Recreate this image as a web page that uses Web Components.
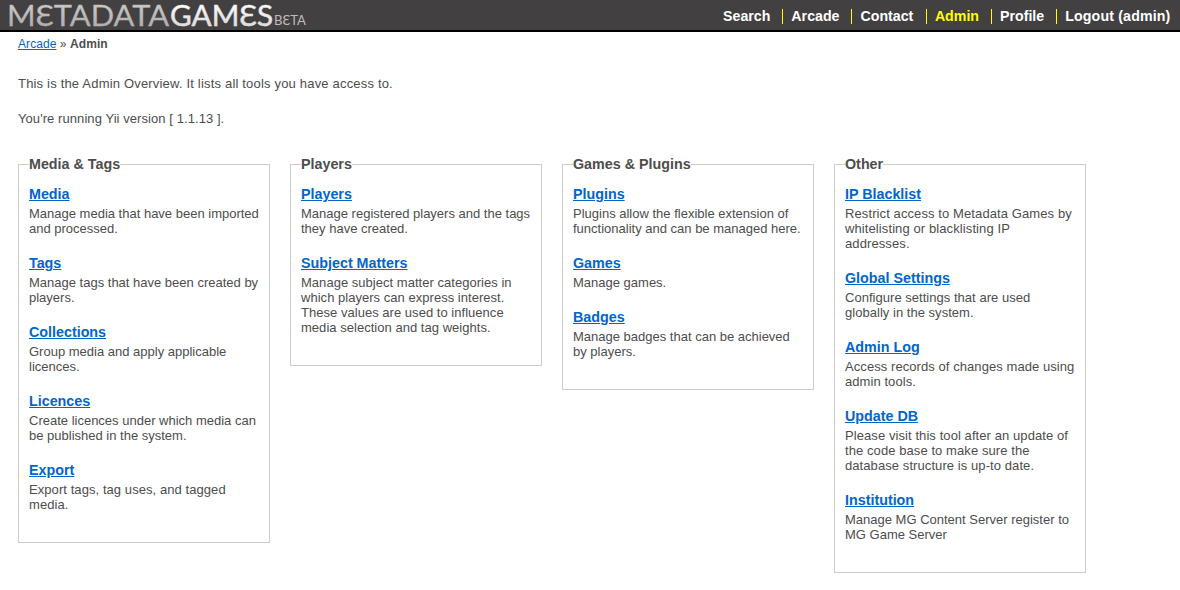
<!DOCTYPE html>
<html lang="en">
<head>
<meta charset="utf-8">
<title>Metadata Games - Admin</title>
<style>
html, body { margin: 0; background: #fff; }
body { font: 13px/15px "Liberation Sans", Arial, sans-serif; color: #4d4d4d; height: 590px; overflow: hidden; }
</style>
</head>
<body>
<mg-page></mg-page>
<script>
const define = (name, html, setup) => customElements.define(name, class extends HTMLElement {
  constructor() {
    super();
    this.attachShadow({ mode: 'open' }).innerHTML = html;
  }
  connectedCallback() { if (setup) setup(this, this.shadowRoot); }
});

define('mg-logo', `
<style>:host{display:block;width:310px;height:30px} svg{display:block;overflow:visible} text{font-family:Lato,"Noto Sans",sans-serif}</style>
<svg width="310" height="30" role="img" aria-label="Metadata Games Beta">
  <defs>
    <linearGradient id="a" x1="0" x2="0" y1="0" y2="1"><stop offset="0.2" stop-color="#cbc9ca"/><stop offset="0.8" stop-color="#b0aeaf"/></linearGradient>
    <linearGradient id="b" x1="0" x2="0" y1="0" y2="1"><stop offset="0.2" stop-color="#fff"/><stop offset="0.8" stop-color="#dcdcdc"/></linearGradient>
  </defs>
  <text x="7" y="26" font-size="29" font-weight="400" fill="url(#a)" stroke="#b9b7b8" stroke-width=".3" textLength="162" lengthAdjust="spacingAndGlyphs">MƐTADATA</text>
  <text x="170" y="26" font-size="29" font-weight="400" fill="url(#b)" stroke="#e8e8e8" stroke-width=".5" textLength="103" lengthAdjust="spacingAndGlyphs">GAMƐS</text>
  <text x="274" y="25" font-size="13" fill="#bdbbbc" textLength="32" lengthAdjust="spacingAndGlyphs">BƐTA</text>
</svg>`);

define('mg-nav-item', `
<style>
:host{display:block;padding:0 12px 0 8px;border-right:1px solid #ff0;height:15px;line-height:15px;color:#fff;white-space:nowrap}
:host([active]){color:#ff0}
:host(:nth-child(3)){padding-right:12.6px}
:host(:last-child){border-right:0;padding-right:9.5px;letter-spacing:.15px}
a{color:inherit;text-decoration:none}
</style><a href="#"><slot></slot></a>`);

define('mg-header', `
<style>
:host{display:flex;justify-content:space-between;height:30px;background:#434041;border-bottom:2px solid #000}
nav{display:flex;padding-top:9px;font-weight:bold;font-size:14.2px}
</style>
<mg-logo></mg-logo>
<nav><slot></slot></nav>`);

define('mg-breadcrumbs', `
<style>:host{display:block;font-size:12px;line-height:14px;letter-spacing:.07px}a{color:#06c}b{font-weight:bold}</style>
<a href="#">Arcade</a> » <b>Admin</b>`);

define('mg-tool', `
<style>
:host{display:block;padding-bottom:19px}
a{display:block;width:max-content;font-weight:bold;font-size:14.3px;line-height:17px;color:#06c;margin-bottom:3px}
p{margin:0;line-height:15px;letter-spacing:var(--tracking,0)}
</style><a href="#"></a><p><slot></slot></p>`, (el, root) => { root.querySelector('a').textContent = el.getAttribute('name'); });

define('mg-panel', `
<style>
:host{display:block}
fieldset{margin:0;min-width:0;box-sizing:border-box;width:252px;border:1px solid #ccc;padding:13px 10px 11px}
legend{padding:0;font-weight:bold;font-size:14.3px;line-height:17px;height:17px}
</style><fieldset><legend></legend><slot></slot></fieldset>`, (el, root) => { root.querySelector('legend').textContent = el.getAttribute('heading'); });

define('mg-page', `
<style>
:host{display:block}
main{padding:5px 18px 0}
p{margin:0 0 20px;line-height:15px}
.intro{letter-spacing:.185px}
.version{letter-spacing:.07px}
mg-breadcrumbs{margin-bottom:25px}
.panels{display:flex;align-items:flex-start;gap:20px;margin-top:30px}
</style>
<mg-header>
  <mg-nav-item>Search</mg-nav-item><mg-nav-item>Arcade</mg-nav-item><mg-nav-item>Contact</mg-nav-item><mg-nav-item active>Admin</mg-nav-item><mg-nav-item>Profile</mg-nav-item><mg-nav-item>Logout (admin)</mg-nav-item>
</mg-header>
<main>
  <mg-breadcrumbs></mg-breadcrumbs>
  <p class="intro">This is the Admin Overview. It lists all tools you have access to.</p>
  <p class="version">You're running Yii version [ 1.1.13 ].</p>
  <div class="panels">
    <mg-panel heading="Media &amp; Tags">
      <mg-tool name="Media">Manage media that have been imported and processed.</mg-tool>
      <mg-tool name="Tags">Manage tags that have been created by players.</mg-tool>
      <mg-tool name="Collections">Group media and apply applicable licences.</mg-tool>
      <mg-tool name="Licences">Create licences under which media can be published in the system.</mg-tool>
      <mg-tool name="Export" style="--tracking:.07px">Export tags, tag uses, and tagged media.</mg-tool>
    </mg-panel>
    <mg-panel heading="Players">
      <mg-tool name="Players">Manage registered players and the tags they have created.</mg-tool>
      <mg-tool name="Subject Matters" style="--tracking:.03px">Manage subject matter categories in which players can express interest. These values are used to influence media selection and tag weights.</mg-tool>
    </mg-panel>
    <mg-panel heading="Games &amp; Plugins">
      <mg-tool name="Plugins">Plugins allow the flexible extension of functionality and can be managed here.</mg-tool>
      <mg-tool name="Games">Manage games.</mg-tool>
      <mg-tool name="Badges">Manage badges that can be achieved by players.</mg-tool>
    </mg-panel>
    <mg-panel heading="Other">
      <mg-tool name="IP Blacklist" style="--tracking:.1px">Restrict access to Metadata Games by whitelisting or blacklisting IP addresses.</mg-tool>
      <mg-tool name="Global Settings" style="--tracking:.03px">Configure settings that are used globally in the system.</mg-tool>
      <mg-tool name="Admin Log" style="--tracking:.07px">Access records of changes made using admin tools.</mg-tool>
      <mg-tool name="Update DB" style="--tracking:.08px">Please visit this tool after an update of the code base to make sure the database structure is up-to date.</mg-tool>
      <mg-tool name="Institution">Manage MG Content Server register to MG Game Server</mg-tool>
    </mg-panel>
  </div>
</main>`);
</script>
</body>
</html>
